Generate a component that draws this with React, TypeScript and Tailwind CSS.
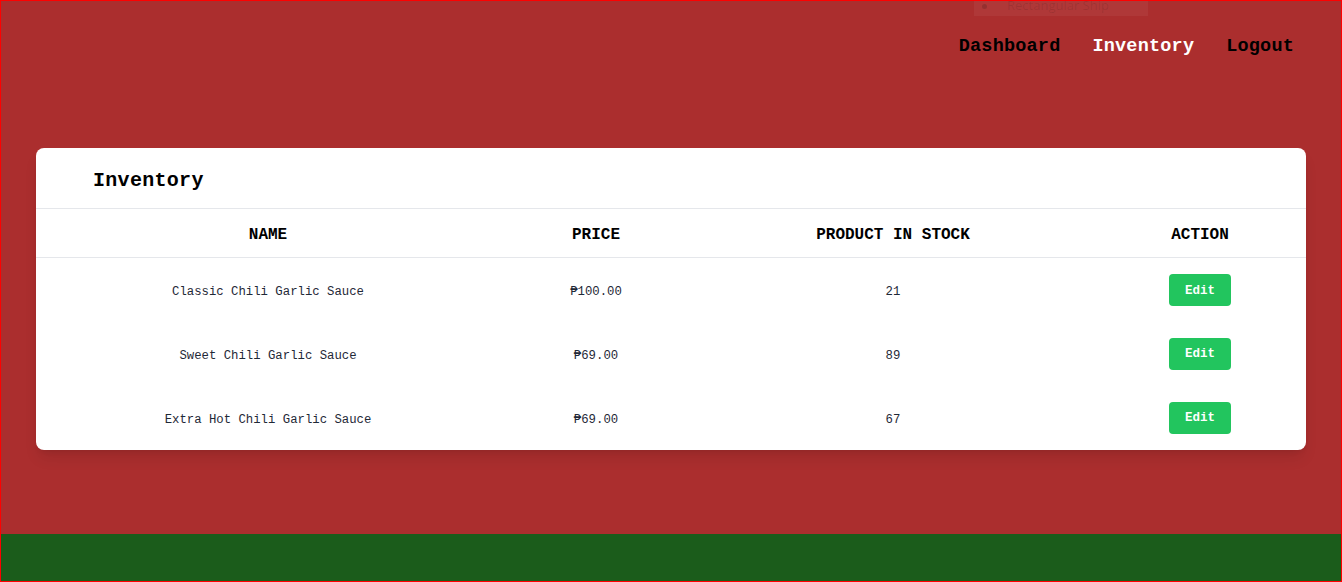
import React from "react"

const products = [
  { name: "Classic Chili Garlic Sauce", price: "₱100.00", stock: 21 },
  { name: "Sweet Chili Garlic Sauce", price: "₱69.00", stock: 89 },
  { name: "Extra Hot Chili Garlic Sauce", price: "₱69.00", stock: 67 },
]

const mono = "font-['Liberation_Mono','DejaVu_Sans_Mono',monospace]"

export default function App() {
  return (
    <div className={`relative flex h-[582px] w-full flex-col overflow-hidden border border-[#ff0000] bg-[#ab2e2e] ${mono}`}>
      {/* faded dropdown peeking from top */}
      <div className="absolute left-[973px] top-[-5px] flex h-[20px] w-[174px] items-center gap-3 bg-white/5 px-2 font-['Open_Sans',sans-serif] text-[13px] text-black/10">
        <span className="h-[5px] w-[5px] rounded-full bg-black/15" />
        <span className="pl-2">Rectangular Ship</span>
      </div>

      {/* Top nav */}
      <nav className="flex justify-end gap-8 pr-[47px] pt-[32px] text-[18.5px] font-bold tracking-[0.2px] text-black">
        <a href="#">Dashboard</a>
        <a href="#" className="text-white">Inventory</a>
        <a href="#">Logout</a>
      </nav>

      {/* Inventory card */}
      <main className="flex-1 px-[35px] pt-[87px]">
        <div className="overflow-hidden rounded-lg bg-white shadow-lg">
          <h1 className="h-[61px] border-b border-gray-200 pl-[57px] pt-[18px] text-[20px] font-bold tracking-[0.3px] text-black">
            Inventory
          </h1>
          <table className="w-full border-collapse">
            <thead>
              <tr className="h-[49px] border-b border-gray-200 text-[16px] font-bold text-black">
                <th className="w-[464px] pt-[4px] text-center">NAME</th>
                <th className="w-[192px] pt-[4px] text-center">PRICE</th>
                <th className="w-[402px] pt-[4px] text-center">PRODUCT IN STOCK</th>
                <th className="pt-[4px] text-center">ACTION</th>
              </tr>
            </thead>
            <tbody className="text-[12.3px] text-[#1f2937]">
              {products.map((p) => (
                <tr key={p.name} className="h-[64px]">
                  <td className="pt-[4px] text-center">{p.name}</td>
                  <td className="pt-[4px] text-center">{p.price}</td>
                  <td className="pt-[4px] text-center">{p.stock}</td>
                  <td className="text-center">
                    <button className="h-[32px] w-[62px] rounded bg-[#22c55e] pt-[2px] text-[12.5px] font-bold text-white">
                      Edit
                    </button>
                  </td>
                </tr>
              ))}
            </tbody>
          </table>
        </div>
      </main>

      <footer className="h-[47px] shrink-0 bg-[#1b5c1b]" />
    </div>
  )
}
